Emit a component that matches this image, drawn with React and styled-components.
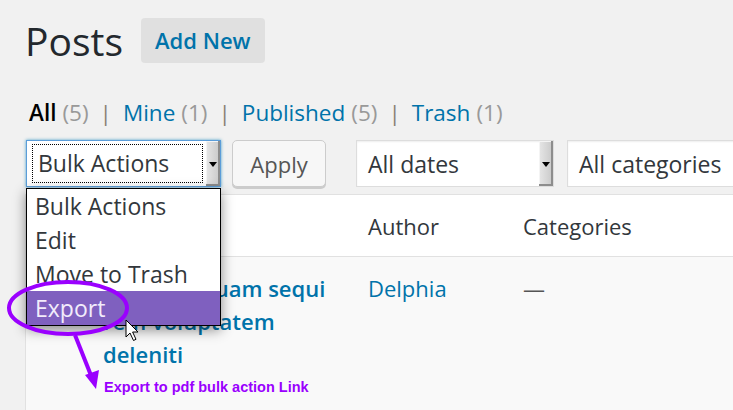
import React from 'react';
import styled, { createGlobalStyle } from 'styled-components';

const GlobalStyle = createGlobalStyle`
  body {
    margin: 0;
    background: #f1f1f1;
    font-family: "Open Sans", "Noto Sans", sans-serif;
    color: #32373c;
  }
`;

const filters = [
  { label: 'All', count: 5, current: true },
  { label: 'Mine', count: 1 },
  { label: 'Published', count: 5 },
  { label: 'Trash', count: 1 },
];

const bulkOptions = ['Bulk Actions', 'Edit', 'Move to Trash', 'Export'];

const App = () => {
  return (
    <PageStyled>
      <GlobalStyle />

      <HeaderStyled>
        <TitleStyled>Posts</TitleStyled>
        <AddNewStyled>Add New</AddNewStyled>
      </HeaderStyled>

      <SubNavStyled>
        {filters.map((f, i) => (
          <li key={f.label}>
            <FilterLink $current={f.current}>{f.label}</FilterLink>
            <CountStyled>({f.count})</CountStyled>
            {i < filters.length - 1 && <SepStyled>|</SepStyled>}
          </li>
        ))}
      </SubNavStyled>

      <ToolbarStyled>
        <BulkWrap>
          <SelectStyled $width={195} $focused>
            <FocusRing>Bulk Actions</FocusRing>
            <ArrowButton />
          </SelectStyled>

          <MenuStyled>
            {bulkOptions.map((o) => (
              <MenuItem key={o} $active={o === 'Export'}>{o}</MenuItem>
            ))}
          </MenuStyled>
        </BulkWrap>

        <ApplyStyled>Apply</ApplyStyled>

        <SelectStyled $width={198} $gap={30}>
          <SelectText>All dates</SelectText>
          <ArrowButton />
        </SelectStyled>

        <SelectStyled $width={220} $gap={13}>
          <SelectText>All categories</SelectText>
        </SelectStyled>
      </ToolbarStyled>

      <TableStyled>
        <HeadRow>
          <CheckCell><CheckBox /></CheckCell>
          <HeadCell />
          <HeadCell>Author</HeadCell>
          <HeadCell>Categories</HeadCell>
        </HeadRow>
        <BodyRow>
          <CheckCell $top><CheckBox /></CheckCell>
          <PostTitle>Dolorem quam sequi rem voluptatem deleniti</PostTitle>
          <BodyCell><LinkText>Delphia</LinkText></BodyCell>
          <BodyCell>—</BodyCell>
        </BodyRow>
      </TableStyled>

      <AnnotationSvg width="733" height="410" viewBox="0 0 733 410">
        <ellipse cx="68" cy="308" rx="59" ry="26" fill="none" stroke="#9a00ff" strokeWidth="4" />
        <line x1="75" y1="335" x2="92" y2="378" stroke="#9a00ff" strokeWidth="4" />
        <polygon points="96,389 85,375 99,370" fill="#9a00ff" />
        {/* mouse pointer */}
        <path
          d="M126 320 L126 337 L130 333 L133.5 340.5 L136 339.3 L132.6 332 L138 332 Z"
          fill="#fff"
          stroke="#000"
          strokeWidth="1"
          strokeLinejoin="round"
        />
      </AnnotationSvg>
      <NoteStyled>Export to pdf bulk action Link</NoteStyled>
    </PageStyled>
  );
};

// styled Components
const PageStyled = styled.div`
  position: relative;
  width: 733px;
  height: 410px;
  overflow: hidden;
  padding-top: 18px;
  box-sizing: border-box;
`;

const HeaderStyled = styled.div`
  display: flex;
  align-items: center;
  padding-left: 25px;
  height: 45px;
`;

const TitleStyled = styled.h1`
  margin: 0;
  font-size: 39px;
  font-weight: 400;
  line-height: 45px;
  color: #23282d;
`;

const AddNewStyled = styled.a`
  margin-left: 18px;
  height: 45px;
  line-height: 45px;
  padding: 0 14px;
  background: #e0e0e0;
  border-radius: 4px;
  color: #0073aa;
  font-size: 22px;
  font-weight: 600;
`;

const SubNavStyled = styled.ul`
  display: flex;
  list-style: none;
  margin: 35px 0 0;
  padding: 0 0 0 29px;
  font-size: 22.5px;
  line-height: 30px;

  li {
    display: flex;
    white-space: pre;
  }
`;

const FilterLink = styled.span`
  color: ${(p) => (p.$current ? '#000' : '#0073aa')};
  font-weight: ${(p) => (p.$current ? 600 : 400)};
`;

const CountStyled = styled.span`
  color: #999;
  margin-left: 6px;
`;

const SepStyled = styled.span`
  color: #8a7f74;
  margin: 0 11px;
`;

const ToolbarStyled = styled.div`
  display: flex;
  align-items: flex-start;
  margin-top: 12px;
  padding-left: 26px;
  height: 47px;
`;

const BulkWrap = styled.div`
  position: relative;
`;

const SelectStyled = styled.div`
  position: relative;
  display: flex;
  align-items: center;
  flex-shrink: 0;
  width: ${(p) => p.$width}px;
  height: 47px;
  margin-left: ${(p) => p.$gap || 0}px;
  box-sizing: border-box;
  background: #fff;
  border: 1px solid ${(p) => (p.$focused ? '#5b9dd9' : '#ddd')};
  box-shadow: ${(p) => (p.$focused ? '0 0 3px rgba(30,140,190,.8)' : 'inset 0 1px 2px rgba(0,0,0,.07)')};
  font-size: 23px;
  color: #32373c;
`;

const FocusRing = styled.div`
  margin: 3px 0 3px 5px;
  flex: 1;
  height: 39px;
  line-height: 37px;
  padding-left: 5px;
  box-sizing: border-box;
  border: 1px dotted #000;
`;

const SelectText = styled.div`
  flex: 1;
  padding-left: 11px;
`;

const ArrowButton = styled.span`
  align-self: stretch;
  width: 14px;
  margin-left: 3px;
  position: relative;
  background: linear-gradient(90deg, #e6e6e6, #c8c8c8);
  box-shadow: inset -2px -2px 0 #8d8d8d, inset 1px 1px 0 #f4f4f4;

  &::after {
    content: '';
    position: absolute;
    left: 3px;
    top: 50%;
    margin-top: -2px;
    border-left: 4px solid transparent;
    border-right: 4px solid transparent;
    border-top: 5px solid #000;
  }
`;

const MenuStyled = styled.ul`
  position: absolute;
  z-index: 5;
  top: 100%;
  left: 0;
  width: 195px;
  margin: 1px 0 0;
  padding: 0;
  list-style: none;
  box-sizing: border-box;
  background: #fff;
  border: 1px solid #000;
  box-shadow: 0 4px 12px rgba(0, 0, 0, 0.45);
`;

const MenuItem = styled.li`
  height: 34px;
  line-height: 34px;
  padding-left: 8px;
  font-size: 23px;
  color: ${(p) => (p.$active ? '#f2ecfb' : '#32373c')};
  background: ${(p) => (p.$active ? '#7f60bf' : 'transparent')};
`;

const ApplyStyled = styled.button`
  flex-shrink: 0;
  margin-left: 11px;
  width: 94px;
  height: 47px;
  background: #f7f7f7;
  border: 1px solid #ccc;
  border-radius: 5px;
  box-shadow: 0 2px 0 #ccc;
  color: #555;
  font-family: inherit;
  font-size: 22px;
  padding: 0;
`;

const TableStyled = styled.div`
  margin: 7px 0 0 25px;
  width: 760px;
  border-left: 1px solid #e1e1e1;
  border-top: 1px solid #e1e1e1;
  background: #f9f9f9;
  height: 220px;
`;

const HeadRow = styled.div`
  display: grid;
  grid-template-columns: 77px 265px 155px 1fr;
  align-items: center;
  height: 61px;
  background: #fff;
  border-bottom: 1px solid #e1e1e1;
  font-size: 22px;
  color: #32373c;
`;

const BodyRow = styled.div`
  display: grid;
  grid-template-columns: 77px 265px 155px 1fr;
  align-items: start;
  padding-top: 15px;
  font-size: 22px;
  line-height: 33px;
`;

const CheckCell = styled.div`
  padding-left: 17px;
  padding-top: ${(p) => (p.$top ? '6px' : 0)};
`;

const CheckBox = styled.span`
  display: block;
  width: 27px;
  height: 27px;
  background: #fff;
  border: 1px solid #b4b9be;
`;

const HeadCell = styled.div`
  color: #32373c;
`;

const PostTitle = styled.div`
  padding-right: 15px;
  color: #0073aa;
  font-weight: 600;
`;

const BodyCell = styled.div`
  color: #555;
`;

const LinkText = styled.span`
  color: #0073aa;
`;

const AnnotationSvg = styled.svg`
  position: absolute;
  left: 0;
  top: 0;
  z-index: 10;
  pointer-events: none;
`;

const NoteStyled = styled.div`
  position: absolute;
  z-index: 10;
  left: 104px;
  top: 379px;
  font-family: "Liberation Sans", Arial, sans-serif;
  font-weight: 700;
  font-size: 14.5px;
  color: #9a00ff;
`;

export default App;
